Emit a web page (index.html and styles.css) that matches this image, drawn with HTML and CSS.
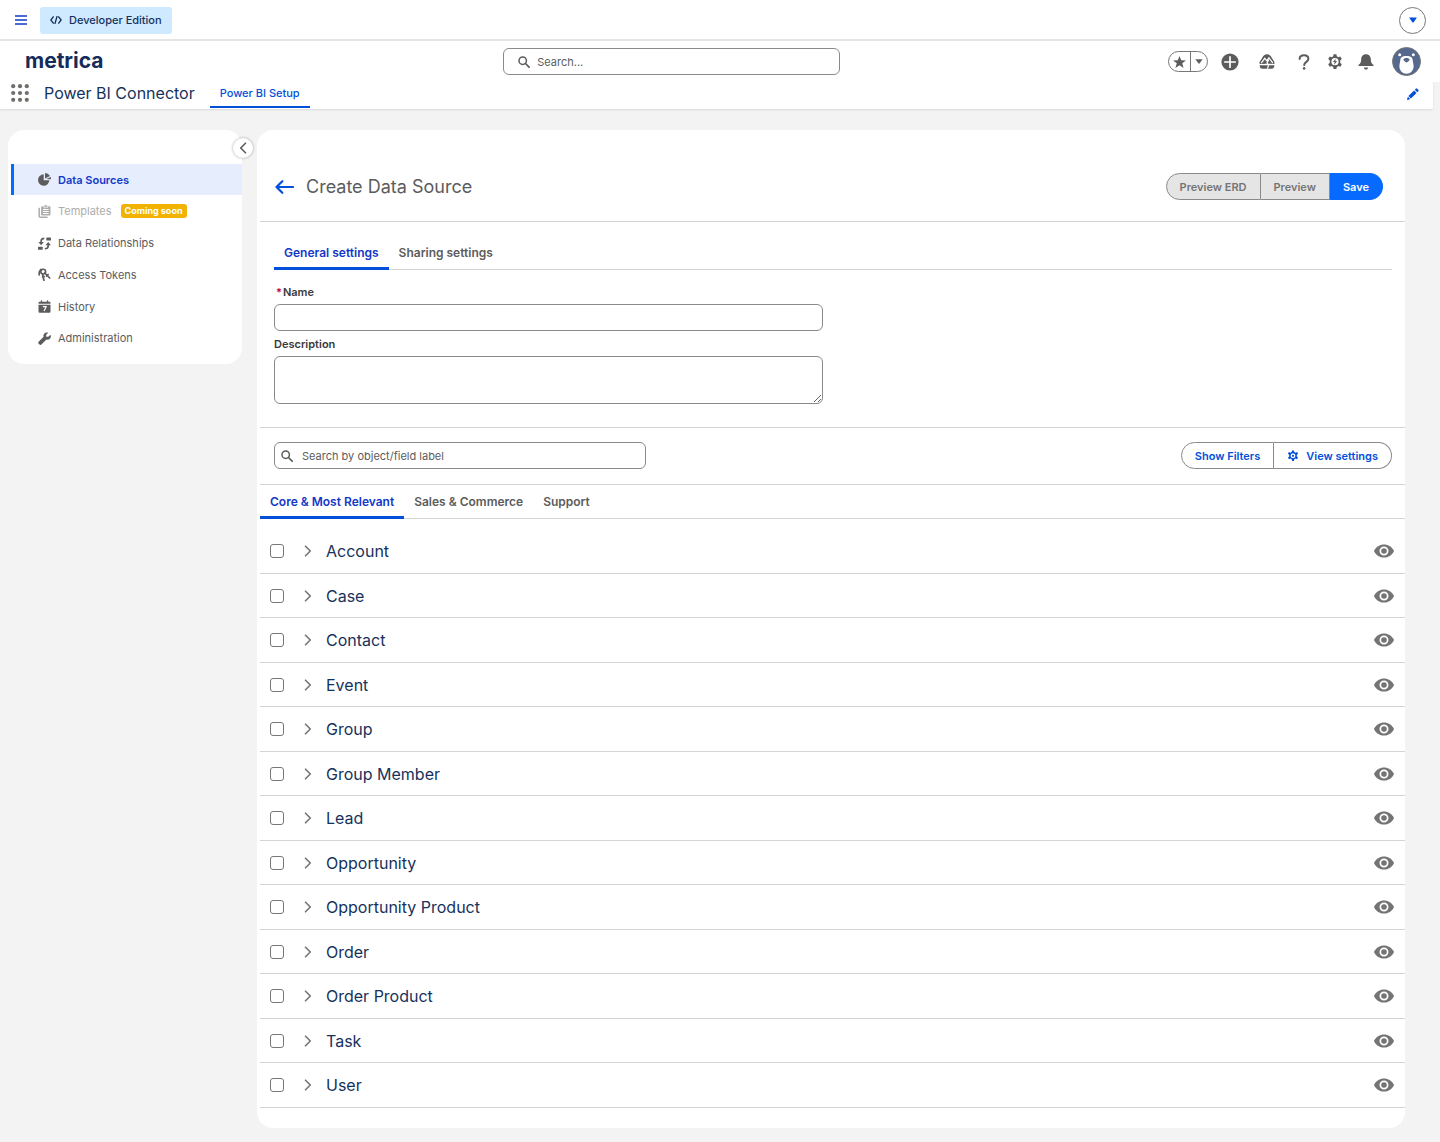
FILE: index.html
```html
<!DOCTYPE html>
<html lang="en">
<head>
<meta charset="utf-8">
<meta name="viewport" content="width=device-width, initial-scale=1">
<title>Power BI Connector</title>
<link rel="stylesheet" href="styles.css">
</head>
<body>
<svg class="sprite" aria-hidden="true">
  <symbol id="eye" viewBox="0 0 20 14"><path fill-rule="evenodd" d="M19.8 6.5C18 2.900 14.300.4 10 .4S2 2.900.2 6.500a1.100 1.100 0 0 0 0 1C2 11.100 5.700 13.600 10 13.600s8-2.500 9.800-6.100a1.100 1.100 0 0 0 0-1zM10 11.500a4.500 4.500 0 1 1 0-9 4.500 4.500 0 0 1 0 9zM10 4.200a2.800 2.800 0 1 0 0 5.600 2.800 2.800 0 0 0 0-5.600z"/></symbol>
  <symbol id="chevron" viewBox="0 0 8 12"><path d="M1.500 1.200 6.300 6 1.500 10.800" fill="none" stroke="currentColor" stroke-width="1.600" stroke-linecap="round" stroke-linejoin="round"/></symbol>
  <symbol id="search" viewBox="0 0 12 12"><circle cx="4.700" cy="4.700" r="3.700" fill="none" stroke="currentColor" stroke-width="1.500"/><path d="m7.500 7.500 3.600 3.600" stroke="currentColor" stroke-width="1.700" stroke-linecap="round"/></symbol>
  <symbol id="gear" viewBox="0 0 16 16"><path fill-rule="evenodd" d="M6.700.5h2.600l.4 2.200 1.500.9 2.200-.8 1.300 2.300-1.700 1.400v2l1.700 1.400-1.300 2.300-2.200-.8-1.500.9-.4 2.200H6.700l-.4-2.200-1.500-.9-2.200.8-1.300-2.300L3 8.500v-2L1.300 5.100l1.300-2.300 2.200.8 1.500-.9zM8 4.100a3.600 3.600 0 1 0 0 7.200 3.600 3.600 0 0 0 0-7.200z"/></symbol>
</svg>

<div class="topbar">
  <button class="menu-button" type="button" aria-label="Menu"><svg width="12" height="10" viewBox="0 0 12 10"><path d="M0 1h12M0 5h12M0 9h12" stroke="currentColor" stroke-width="1.700"/></svg></button>
  <span class="edition"><svg width="12" height="8" viewBox="0 0 12 8"><path d="M3.300.9.800 4l2.500 3.100M8.700.9 11.200 4 8.700 7.100M7 .6 5 7.400" fill="none" stroke="currentColor" stroke-width="1.400" stroke-linecap="round"/></svg>Developer Edition</span>
  <button class="round-button" type="button" aria-label="Show more"><svg width="8" height="6" viewBox="0 0 10 7"><path d="M.4.300h9.200Q9.900.6 9.500 1L5.600 6.500Q5 7 4.400 6.500L.5 1Q.1.600.4.300z"/></svg></button>
</div>

<header class="header">
  <a class="logo" href="#">metrica</a>
  <label class="search search-global"><svg class="search-icon"><use href="#search"/></svg><input type="search" aria-label="Search" placeholder="Search..."></label>
  <div class="tools">
    <div class="favorites">
      <button type="button" aria-label="Favorite"><svg width="13" height="12" viewBox="0 0 13 12"><path d="m6.500 0 1.700 4.200 4.800.2-3.800 2.900 1.400 4.700-4.100-2.700L2.400 12l1.400-4.700L0 4.400l4.800-.2z"/></svg></button>
      <button type="button" aria-label="Favorites list"><svg width="8" height="5" viewBox="0 0 8 5"><path d="M.3.300h7.400L4 4.900z"/></svg></button>
    </div>
    <button class="tool" type="button" aria-label="Add"><svg width="18" height="18" viewBox="0 0 18 18"><circle cx="9" cy="9" r="8.600"/><path d="M9 3.800v10.400M3.800 9h10.400" stroke="#fff" stroke-width="1.700" stroke-linecap="round"/></svg></button>
    <button class="tool" type="button" aria-label="Guidance"><svg width="16" height="15" viewBox="0 0 16 15"><path d="M8 .2c2.300 0 3.700 1.300 4.600 3.200l2.600 4.400q.8 1.500-.2 2.100L8 9.800l-7 .1Q0 9.300.8 7.800l2.600-4.400C4.300 1.500 5.700.2 8 .2z"/><path d="M.6 11.200h14.800q0 3.500-3.200 3.500H3.800q-3.200 0-3.200-3.500z"/><path d="m2.200 9.200 3.600-4.900 2 2.500 2.100-3.100 4 5.500M9.900 5.500 8 9l1.600 2.200-1.200 3.500" fill="none" stroke="#fff" stroke-width="1.200"/></svg></button>
    <button class="tool" type="button" aria-label="Help"><svg width="12" height="16" viewBox="0 0 12 16"><path d="M1.600 4.900C1.700 2.600 3.400 1.200 6 1.200s4.400 1.500 4.400 3.500c0 3.300-4.200 3-4.200 6.300" fill="none" stroke="currentColor" stroke-width="2" stroke-linecap="round"/><circle cx="6.100" cy="14.400" r="1.300"/></svg></button>
    <button class="tool" type="button" aria-label="Setup"><svg width="16" height="16" viewBox="0 0 16 16"><path fill-rule="evenodd" d="M6.600.3h2.800l.4 2 1.500.9 2-.7 1.500 2.500-1.600 1.400v2.400l1.600 1.400-1.500 2.500-2-.7-1.500.9-.4 2H6.600l-.4-2-1.500-.9-2 .7-1.500-2.500 1.600-1.400V6.400L1.200 5l1.500-2.500 2 .7 1.500-.9zM8 4.100a3.600 3.600 0 1 0 0 7.200 3.600 3.600 0 0 0 0-7.200z"/><path d="M8.700 4.800 5.900 8.100h1.700L7.200 10.800 10.100 7.300H8.400z"/></svg></button>
    <button class="tool" type="button" aria-label="Notifications"><svg width="16" height="16" viewBox="0 0 16 16"><path d="M8 .3c3 0 4.800 2.200 4.800 5 0 3.400 1 4.200 2.200 5.100.8.6.8 1.700-.1 1.700H1.100c-.9 0-.9-1.100-.1-1.700 1.200-.9 2.200-1.700 2.200-5.100 0-2.800 1.800-5 4.800-5zM5.900 13.600h4.200a2.100 2.100 0 0 1-4.200 0z"/></svg></button>
    <button class="avatar" type="button" aria-label="Profile"><svg width="29" height="29" viewBox="0 0 29 29"><circle cx="14.500" cy="14.500" r="14" fill="#54698d" stroke="#777" stroke-width="1"/><circle cx="7.700" cy="7.800" r="1.500" fill="#fff"/><circle cx="21.300" cy="7.800" r="1.500" fill="#fff"/><path d="M14.500 8.900c3.700 0 6.200 1.400 6.200 4.100 0 1.600.9 3.400.9 6.300 0 4.600-3.200 7.400-7.100 7.400s-7.100-2.800-7.100-7.400c0-2.900.9-4.700.9-6.300 0-2.700 2.500-4.100 6.200-4.100z" fill="#fff"/><path d="M11.500 12.600c0-1.200 1.300-1.700 3-1.700s3 .5 3 1.700-1.600 2.800-3 2.800-3-1.600-3-2.800z" fill="#54698d"/></svg></button>
  </div>
</header>

<nav class="appnav" aria-label="App">
  <button class="launcher" type="button" aria-label="App launcher"><svg width="18" height="18" viewBox="0 0 18 18"><g><circle cx="2.200" cy="2.200" r="2.100"/><circle cx="9" cy="2.200" r="2.100"/><circle cx="15.800" cy="2.200" r="2.100"/><circle cx="2.200" cy="9" r="2.100"/><circle cx="9" cy="9" r="2.100"/><circle cx="15.800" cy="9" r="2.100"/><circle cx="2.200" cy="15.800" r="2.100"/><circle cx="9" cy="15.800" r="2.100"/><circle cx="15.800" cy="15.800" r="2.100"/></g></svg></button>
  <span class="app-name">Power BI Connector</span>
  <a class="app-tab" href="#">Power BI Setup</a>
  <button class="edit" type="button" aria-label="Edit navigation"><svg width="12" height="12" viewBox="0 0 12 12"><path d="M8.800.7q.7-.7 1.400 0l1.100 1.100q.7.700 0 1.400l-1 1-2.500-2.500zM7.100 2.400l2.500 2.500-5.700 5.700-2.500-2.500zM.9 8.800l2.300 2.300-2.400.8q-.8.200-.7-.6z"/></svg></button>
</nav>

<main class="page">
  <aside class="sidebar">
    <button class="collapse" type="button" aria-label="Collapse sidebar"><svg width="8" height="12"><use href="#chevron" transform="rotate(180 4 6)"/></svg></button>
    <ul class="side-list">
      <li><a class="side-link active" href="#"><svg width="13" height="13" viewBox="0 0 13 13"><path d="M5.700 1.300v6h5.700A5.700 5.700 0 1 1 5.700 1.300z"/><path d="M7 0a6 6 0 0 1 5 3L7 5.600z"/><path d="M8.300 6 12.700 3.900q.4 1.200.2 2.300z"/></svg>Data Sources</a></li>
      <li><a class="side-link disabled" href="#"><svg width="13" height="13" viewBox="0 0 13 13"><path d="M1.200 2.800v8.400q0 1 1 1h7.300" fill="none" stroke="currentColor" stroke-width="1.500"/><path fill-rule="evenodd" d="M4 1.200h1.500V2.500h4.600V1.200h1.500q.9 0 .9.900v7.500q0 .9-.9.900H4q-.9 0-.9-.9V2.100q0-.9.900-.9zM5 4v.9h5.600V4zM5 6v.9h5.600V6zM5 8v.9h5.600V8z"/><path d="M6.300.3h3V1.900h-3z"/></svg>Templates<span class="badge">Coming soon</span></a></li>
      <li><a class="side-link" href="#"><svg width="13" height="13" viewBox="0 0 13 13"><rect x="8.300" y=".5" width="4.700" height="3" rx=".5"/><rect x="0" y="9.700" width="4.700" height="3" rx=".5"/><path d="M6.300 1.400Q3.100 1.500 3.100 4.200V6M6.800 11.800Q10.200 11.700 10.200 9V7" fill="none" stroke="currentColor" stroke-width="1.600"/><path d="M.4 5h5.400L3.100 8.200zM7.500 8.200h5.400L10.200 5z"/></svg>Data Relationships</a></li>
      <li><a class="side-link" href="#"><svg width="13" height="13" viewBox="0 0 13 13"><circle cx="5.200" cy="3.600" r="2.400" fill="none" stroke="currentColor" stroke-width="1.600"/><path d="m6.700 5 5 5M8.600 8l1.500-1.500M1.200 6.800Q.7 3.500 3 1.500M4.600 6.500l1.300 5.800M4.600 9l1.600-.4" fill="none" stroke="currentColor" stroke-width="1.700" stroke-linecap="round"/></svg>Access Tokens</a></li>
      <li><a class="side-link" href="#"><svg width="13" height="13" viewBox="0 0 13 13"><path d="M.5 3.800V2.700q0-1 1-1h1.300V.9q0-.7.700-.7t.7.700v.8h4.600V.9q0-.7.700-.7t.7.700v.8h1.300q1 0 1 1v1.100zM.5 4.800h12v6.900q0 1.100-1 1.100h-10q-1 0-1-1.100z"/><path d="M4.800 6.700h3.300L6.100 11" fill="none" stroke="#fff" stroke-width="1.200"/></svg>History</a></li>
      <li><a class="side-link" href="#"><svg width="13" height="13" viewBox="0 0 13 13"><path d="M12.600 3.200q.9 2-.7 3.500-1.400 1.400-3.400.8l-5.100 5q-.8.700-1.600.2l-1.300-1.300q-.7-.8.100-1.600l5-5q-.6-2 .8-3.400Q7.900-.1 9.900.6q.3.200.1.400L8.200 2.800v2h2L12.200 3q.3-.2.400.2z"/></svg>Administration</a></li>
    </ul>
  </aside>

  <section class="card">
    <div class="card-head">
      <a class="back" href="#" aria-label="Back"><svg width="19" height="14" viewBox="0 0 19 14"><path d="M18 7H1.600M7.300 1.200 1.500 7l5.800 5.800" fill="none" stroke="currentColor" stroke-width="2.200" stroke-linecap="round" stroke-linejoin="round"/></svg></a>
      <h1>Create Data Source</h1>
      <div class="button-group">
        <button class="button" type="button" disabled>Preview ERD</button>
        <button class="button" type="button" disabled>Preview</button>
        <button class="button primary" type="button">Save</button>
      </div>
    </div>

    <form class="settings">
      <div class="tabs">
        <a class="tab active" href="#">General settings</a>
        <a class="tab" href="#">Sharing settings</a>
      </div>
      <div class="fields">
        <label class="label required" for="name"><span class="star">*</span>Name</label>
        <input class="field" id="name" type="text">
        <label class="label" for="description">Description</label>
        <textarea class="field area" id="description"></textarea>
      </div>
    </form>

    <div class="toolbar">
      <label class="search search-objects"><svg class="search-icon"><use href="#search"/></svg><input type="search" aria-label="Search objects" placeholder="Search by object/field label"></label>
      <div class="button-group outline">
        <button class="button" type="button">Show Filters</button>
        <button class="button" type="button"><svg width="12" height="12" viewBox="0 0 16 16"><use href="#gear" width="16" height="16"/><circle cx="8" cy="7.700" r="3.900" fill="none" stroke="currentColor" stroke-width="1.200"/><circle cx="8" cy="7.700" r="1.500"/></svg>View settings</button>
      </div>
    </div>

    <div class="tabs">
      <a class="tab active" href="#">Core &amp; Most Relevant</a>
      <a class="tab" href="#">Sales &amp; Commerce</a>
      <a class="tab" href="#">Support</a>
    </div>

    <ul class="objects">
      <li><input type="checkbox" aria-labelledby="o1"><button class="icon-button" type="button" aria-label="Expand"><svg width="8" height="12"><use href="#chevron"/></svg></button><span class="object-name" id="o1">Account</span><button class="icon-button" type="button" aria-label="View"><svg width="20" height="14"><use href="#eye"/></svg></button></li>
      <li><input type="checkbox" aria-labelledby="o2"><button class="icon-button" type="button" aria-label="Expand"><svg width="8" height="12"><use href="#chevron"/></svg></button><span class="object-name" id="o2">Case</span><button class="icon-button" type="button" aria-label="View"><svg width="20" height="14"><use href="#eye"/></svg></button></li>
      <li><input type="checkbox" aria-labelledby="o3"><button class="icon-button" type="button" aria-label="Expand"><svg width="8" height="12"><use href="#chevron"/></svg></button><span class="object-name" id="o3">Contact</span><button class="icon-button" type="button" aria-label="View"><svg width="20" height="14"><use href="#eye"/></svg></button></li>
      <li><input type="checkbox" aria-labelledby="o4"><button class="icon-button" type="button" aria-label="Expand"><svg width="8" height="12"><use href="#chevron"/></svg></button><span class="object-name" id="o4">Event</span><button class="icon-button" type="button" aria-label="View"><svg width="20" height="14"><use href="#eye"/></svg></button></li>
      <li><input type="checkbox" aria-labelledby="o5"><button class="icon-button" type="button" aria-label="Expand"><svg width="8" height="12"><use href="#chevron"/></svg></button><span class="object-name" id="o5">Group</span><button class="icon-button" type="button" aria-label="View"><svg width="20" height="14"><use href="#eye"/></svg></button></li>
      <li><input type="checkbox" aria-labelledby="o6"><button class="icon-button" type="button" aria-label="Expand"><svg width="8" height="12"><use href="#chevron"/></svg></button><span class="object-name" id="o6">Group Member</span><button class="icon-button" type="button" aria-label="View"><svg width="20" height="14"><use href="#eye"/></svg></button></li>
      <li><input type="checkbox" aria-labelledby="o7"><button class="icon-button" type="button" aria-label="Expand"><svg width="8" height="12"><use href="#chevron"/></svg></button><span class="object-name" id="o7">Lead</span><button class="icon-button" type="button" aria-label="View"><svg width="20" height="14"><use href="#eye"/></svg></button></li>
      <li><input type="checkbox" aria-labelledby="o8"><button class="icon-button" type="button" aria-label="Expand"><svg width="8" height="12"><use href="#chevron"/></svg></button><span class="object-name" id="o8">Opportunity</span><button class="icon-button" type="button" aria-label="View"><svg width="20" height="14"><use href="#eye"/></svg></button></li>
      <li><input type="checkbox" aria-labelledby="o9"><button class="icon-button" type="button" aria-label="Expand"><svg width="8" height="12"><use href="#chevron"/></svg></button><span class="object-name" id="o9">Opportunity Product</span><button class="icon-button" type="button" aria-label="View"><svg width="20" height="14"><use href="#eye"/></svg></button></li>
      <li><input type="checkbox" aria-labelledby="o10"><button class="icon-button" type="button" aria-label="Expand"><svg width="8" height="12"><use href="#chevron"/></svg></button><span class="object-name" id="o10">Order</span><button class="icon-button" type="button" aria-label="View"><svg width="20" height="14"><use href="#eye"/></svg></button></li>
      <li><input type="checkbox" aria-labelledby="o11"><button class="icon-button" type="button" aria-label="Expand"><svg width="8" height="12"><use href="#chevron"/></svg></button><span class="object-name" id="o11">Order Product</span><button class="icon-button" type="button" aria-label="View"><svg width="20" height="14"><use href="#eye"/></svg></button></li>
      <li><input type="checkbox" aria-labelledby="o12"><button class="icon-button" type="button" aria-label="Expand"><svg width="8" height="12"><use href="#chevron"/></svg></button><span class="object-name" id="o12">Task</span><button class="icon-button" type="button" aria-label="View"><svg width="20" height="14"><use href="#eye"/></svg></button></li>
      <li><input type="checkbox" aria-labelledby="o13"><button class="icon-button" type="button" aria-label="Expand"><svg width="8" height="12"><use href="#chevron"/></svg></button><span class="object-name" id="o13">User</span><button class="icon-button" type="button" aria-label="View"><svg width="20" height="14"><use href="#eye"/></svg></button></li>
    </ul>
  </section>
</main>
</body>
</html>
```
FILE: styles.css
```css
:root {
  --blue: #0250d9;
  --deep-blue: #1238c9;
  --navy: #16325c;
  --gray: #5c5c5c;
  --line: #d4d4d4;
  --field-border: #8a8a8a;
}

* {
  box-sizing: border-box;
}

body {
  margin: 0;
  background: #f3f3f3;
  color: var(--gray);
  font-family: Inter, "Liberation Sans", sans-serif;
  font-size: 11px;
  line-height: 16px;
}

svg {
  display: block;
  flex: none;
  fill: currentColor;
}

.sprite {
  position: absolute;
  width: 0;
  height: 0;
}

a {
  color: inherit;
  text-decoration: none;
}

button {
  margin: 0;
  padding: 0;
  border: 0;
  background: none;
  color: inherit;
  font: inherit;
}

ul {
  margin: 0;
  padding: 0;
  list-style: none;
}

.topbar {
  display: flex;
  align-items: center;
  height: 41px;
  padding: 1px 14px 0 15px;
  border-bottom: 2px solid #e5e5e5;
  background: #fff;
}

.menu-button {
  color: var(--deep-blue);
}

.edition {
  display: flex;
  align-items: center;
  gap: 7px;
  height: 27px;
  margin-left: 13px;
  padding: 0 10px;
  border-radius: 3px;
  background: #cfe9fe;
  color: var(--navy);
  font-weight: 500;
}

.round-button {
  display: grid;
  place-items: center;
  width: 27px;
  height: 27px;
  margin-left: auto;
  border: 1px solid #777;
  border-radius: 50%;
  color: var(--blue);
}

.header {
  display: grid;
  grid-template-columns: 14fr 337px 17fr;
  align-items: center;
  height: 41px;
  padding: 0 19px 0 25px;
  background: #fff;
}

.logo {
  justify-self: start;
  padding-bottom: 2px;
  color: #152c5b;
  font-size: 21px;
  font-weight: 700;
  line-height: 24px;
}

.search {
  display: flex;
  align-items: center;
  height: 27px;
  border: 1px solid var(--field-border);
  border-radius: 6px;
  background: #fff;
}

.search-global {
  gap: 7px;
  padding: 0 14px;
}

.search-icon {
  width: 12px;
  height: 12px;
}

.search input {
  flex: 1;
  min-width: 0;
  padding: 0;
  border: 0;
  outline: 0;
  background: none;
  font: inherit;
}

.search input::placeholder {
  color: var(--gray);
}

.tools {
  display: flex;
  align-items: center;
  justify-content: flex-end;
}

.favorites {
  display: flex;
  width: 40px;
  height: 21px;
  margin-right: 11px;
  border: 1px solid #777;
  border-radius: 11px;
}

.favorites button {
  display: grid;
  flex: 1 1 21px;
  place-items: center;
}

.favorites button + button {
  flex-basis: 17px;
  border-left: 1px solid #777;
}

.tool {
  display: grid;
  place-items: center;
  width: 22px;
  margin-right: 9px;
}

.tool:nth-child(2),
.tool:nth-child(3) {
  margin-right: 15px;
}

.avatar {
  margin-left: 6px;
}

.appnav {
  display: flex;
  height: 27px;
  margin-right: 7px;
  padding: 0 14px 0 11px;
  background: #fff;
  box-shadow: 0 1px 2px rgba(0, 0, 0, 0.1);
}

.launcher {
  height: 22px;
  color: #706e6b;
}

.app-name {
  margin: 0 15px;
  color: var(--navy);
  font-size: 16px;
  line-height: 22px;
}

.app-tab {
  height: 26px;
  padding: 0 10px;
  border-bottom: 2px solid var(--blue);
  color: var(--blue);
  font-weight: 500;
  line-height: 22px;
}

.edit {
  height: 24px;
  margin-left: auto;
  color: var(--blue);
}

.page {
  display: grid;
  grid-template-columns: 234px 1fr;
  align-items: start;
  gap: 15px;
  padding: 21px 35px 14px 8px;
}

.sidebar {
  position: relative;
  padding: 34px 0 10px 3px;
  border-radius: 16px;
  background: #fff;
}

.collapse {
  position: absolute;
  top: 8px;
  right: -11px;
  display: grid;
  place-items: center;
  width: 20px;
  height: 20px;
  border-radius: 50%;
  background: #fff;
  box-shadow: 0 0 3px rgba(0, 0, 0, 0.35);
}

.side-list {
  display: flex;
  flex-direction: column;
  justify-content: space-between;
  min-height: 190px;
}

.side-link {
  display: flex;
  align-items: center;
  gap: 7px;
  height: 31px;
  padding-left: 24px;
  border-left: 3px solid transparent;
}

.side-link.active {
  border-color: #066afe;
  background: #e6edfd;
  color: var(--deep-blue);
  font-weight: 600;
}

.side-link.active svg {
  color: var(--gray);
}

.side-link.disabled {
  color: #adadad;
}

.badge {
  margin-left: 2px;
  padding: 0 4px;
  border-radius: 3px;
  background: #f2b200;
  color: #fff;
  font-size: 9px;
  font-weight: 700;
  line-height: 14px;
}

.card {
  min-width: 0;
  padding: 0 0 20px 3px;
  border-radius: 16px;
  background: #fff;
}

.card-head {
  display: flex;
  align-items: center;
  padding: 43px 22px 21px 15px;
  border-bottom: 1px solid var(--line);
}

.back {
  color: var(--blue);
}

h1 {
  margin: 0 0 0 12px;
  font-size: 18px;
  font-weight: 400;
  line-height: 27px;
}

.button-group {
  display: flex;
  margin-left: auto;
}

.button {
  display: flex;
  align-items: center;
  gap: 7px;
  height: 27px;
  padding: 0 13px;
  border: 1px solid var(--field-border);
  background: #fff;
  color: var(--blue);
  font-weight: 600;
}

.button + .button {
  border-left: 0;
}

.button:first-child {
  border-radius: 14px 0 0 14px;
}

.button:last-child {
  border-radius: 0 14px 14px 0;
}

.button:disabled {
  background: #e5e5e5;
  color: #757575;
}

.button.primary {
  border-color: #066afe;
  background: #066afe;
  color: #fff;
}

.settings {
  padding: 14px 13px 23px 14px;
  border-bottom: 1px solid var(--line);
}

.tabs {
  display: flex;
  height: 34px;
  border-bottom: 1px solid var(--line);
}

.tab {
  height: 34px;
  padding: 0 10px;
  font-size: 12px;
  font-weight: 600;
  line-height: 34px;
}

.tab.active {
  border-bottom: 3px solid var(--blue);
  color: var(--deep-blue);
}

.fields {
  display: flex;
  flex-direction: column;
  width: 549px;
  max-width: 100%;
}

.label {
  margin-top: 3px;
  padding-bottom: 2px;
  color: #3a3a3a;
  font-weight: 600;
  line-height: 20px;
}

.label.required {
  margin-top: 12px;
}

.star {
  padding: 0 1px 0 2px;
  color: #b60554;
}

.field {
  display: block;
  width: 100%;
  height: 27px;
  padding: 0 10px;
  border: 1px solid var(--field-border);
  border-radius: 6px;
  background: #fff;
  font: inherit;
}

.area {
  height: 48px;
  resize: vertical;
}

.toolbar {
  display: flex;
  align-items: center;
  padding: 14px 13px 15px 14px;
  border-bottom: 1px solid var(--line);
}

.search-objects {
  gap: 9px;
  width: 372px;
  padding: 0 6px;
}

.objects {
  padding-top: 10px;
}

.objects li {
  display: flex;
  align-items: center;
  height: 44px;
  padding: 0 11px 0 10px;
  border-bottom: 1px solid var(--line);
}

.objects li:nth-child(odd) {
  height: 45px;
}

.objects input {
  appearance: none;
  width: 14px;
  height: 14px;
  margin: 0 20px 0 0;
  border: 1px solid #777;
  border-radius: 3px;
  background: #fff;
}

.object-name {
  flex: 1;
  margin-left: 14px;
  color: var(--navy);
  font-size: 16px;
  line-height: 22px;
}

.icon-button {
  color: #747474;
}
```
